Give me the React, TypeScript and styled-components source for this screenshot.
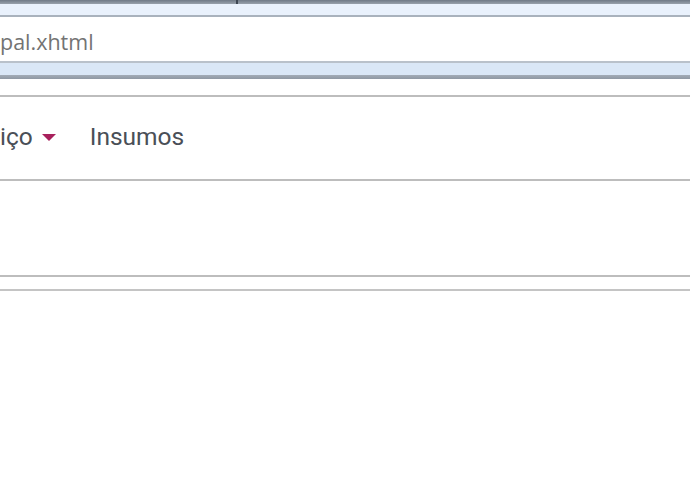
import React from "react";
import styled, { createGlobalStyle } from "styled-components";

const Global = createGlobalStyle`
  html, body { margin: 0; padding: 0; background: #ffffff; }
  body { font-family: Roboto, "Liberation Sans", sans-serif; }
`;

const Page = styled.div`
  width: 690px;
  height: 500px;
  overflow: hidden;
  display: flex;
  flex-direction: column;
  background: #fff;
`;

const FrameTop = styled.div`
  height: 4px;
  display: flex;
  background: linear-gradient(#6f7986, #98a1ac);
`;

const FrameSegment = styled.div<{ $w?: number }>`
  ${(p) => (p.$w ? `width: ${p.$w}px;` : "flex: 1;")}
`;

const FrameTick = styled.div`
  width: 2px;
  background: #3d4652;
`;

const Band = styled.div<{ $bg: string; $h: number }>`
  height: ${(p) => p.$h}px;
  background: ${(p) => p.$bg};
`;

const Rule = styled.div<{ $c: string; $h: number }>`
  height: ${(p) => p.$h}px;
  background: ${(p) => p.$c};
`;

const AddressBar = styled.div`
  height: 44px;
  box-sizing: border-box;
  padding-top: 4px;
  display: flex;
  align-items: center;
  background: #fff;
  font-family: "Open Sans", "Noto Sans", sans-serif;
  font-size: 21.5px;
  color: #737373;
  white-space: nowrap;
  overflow: hidden;
`;

const Spacer = styled.div<{ $h: number }>`
  height: ${(p) => p.$h}px;
`;

const Nav = styled.nav`
  height: 82px;
  box-sizing: border-box;
  padding-bottom: 3px;
  display: flex;
  align-items: center;
  gap: 34px;
  font-family: Roboto, "Liberation Sans", sans-serif;
  font-size: 24.5px;
  color: #4a4f57;
  white-space: nowrap;
`;

const NavItem = styled.span`
  display: inline-flex;
  align-items: center;
  gap: 9px;
`;

const Caret = styled.span`
  width: 0;
  height: 0;
  border-left: 7px solid transparent;
  border-right: 7px solid transparent;
  border-top: 7px solid #a8205c;
  margin-top: 2px;
`;

export default function App() {
  return (
    <>
      <Global />
      <Page>
        <FrameTop>
          <FrameSegment $w={236} />
          <FrameTick />
          <FrameSegment />
        </FrameTop>
        <Band $bg="#e9f1fc" $h={11} />
        <Rule $c="#a9b2bd" $h={2} />
        <AddressBar>pal.xhtml</AddressBar>
        <Rule $c="#b9c1ca" $h={2} />
        <Band $bg="#dae7f6" $h={12} />
        <Rule $c="linear-gradient(#a3acb7, #8f98a3)" $h={4} />
        <Spacer $h={16} />
        <Rule $c="#bdbdbd" $h={2} />
        <Nav>
          <NavItem>
            iço
            <Caret />
          </NavItem>
          <NavItem>Insumos</NavItem>
        </Nav>
        <Rule $c="#bdbdbd" $h={2} />
        <Spacer $h={94} />
        <Rule $c="#bdbdbd" $h={2} />
        <Spacer $h={12} />
        <Rule $c="#c4c4c4" $h={2} />
      </Page>
    </>
  );
}
